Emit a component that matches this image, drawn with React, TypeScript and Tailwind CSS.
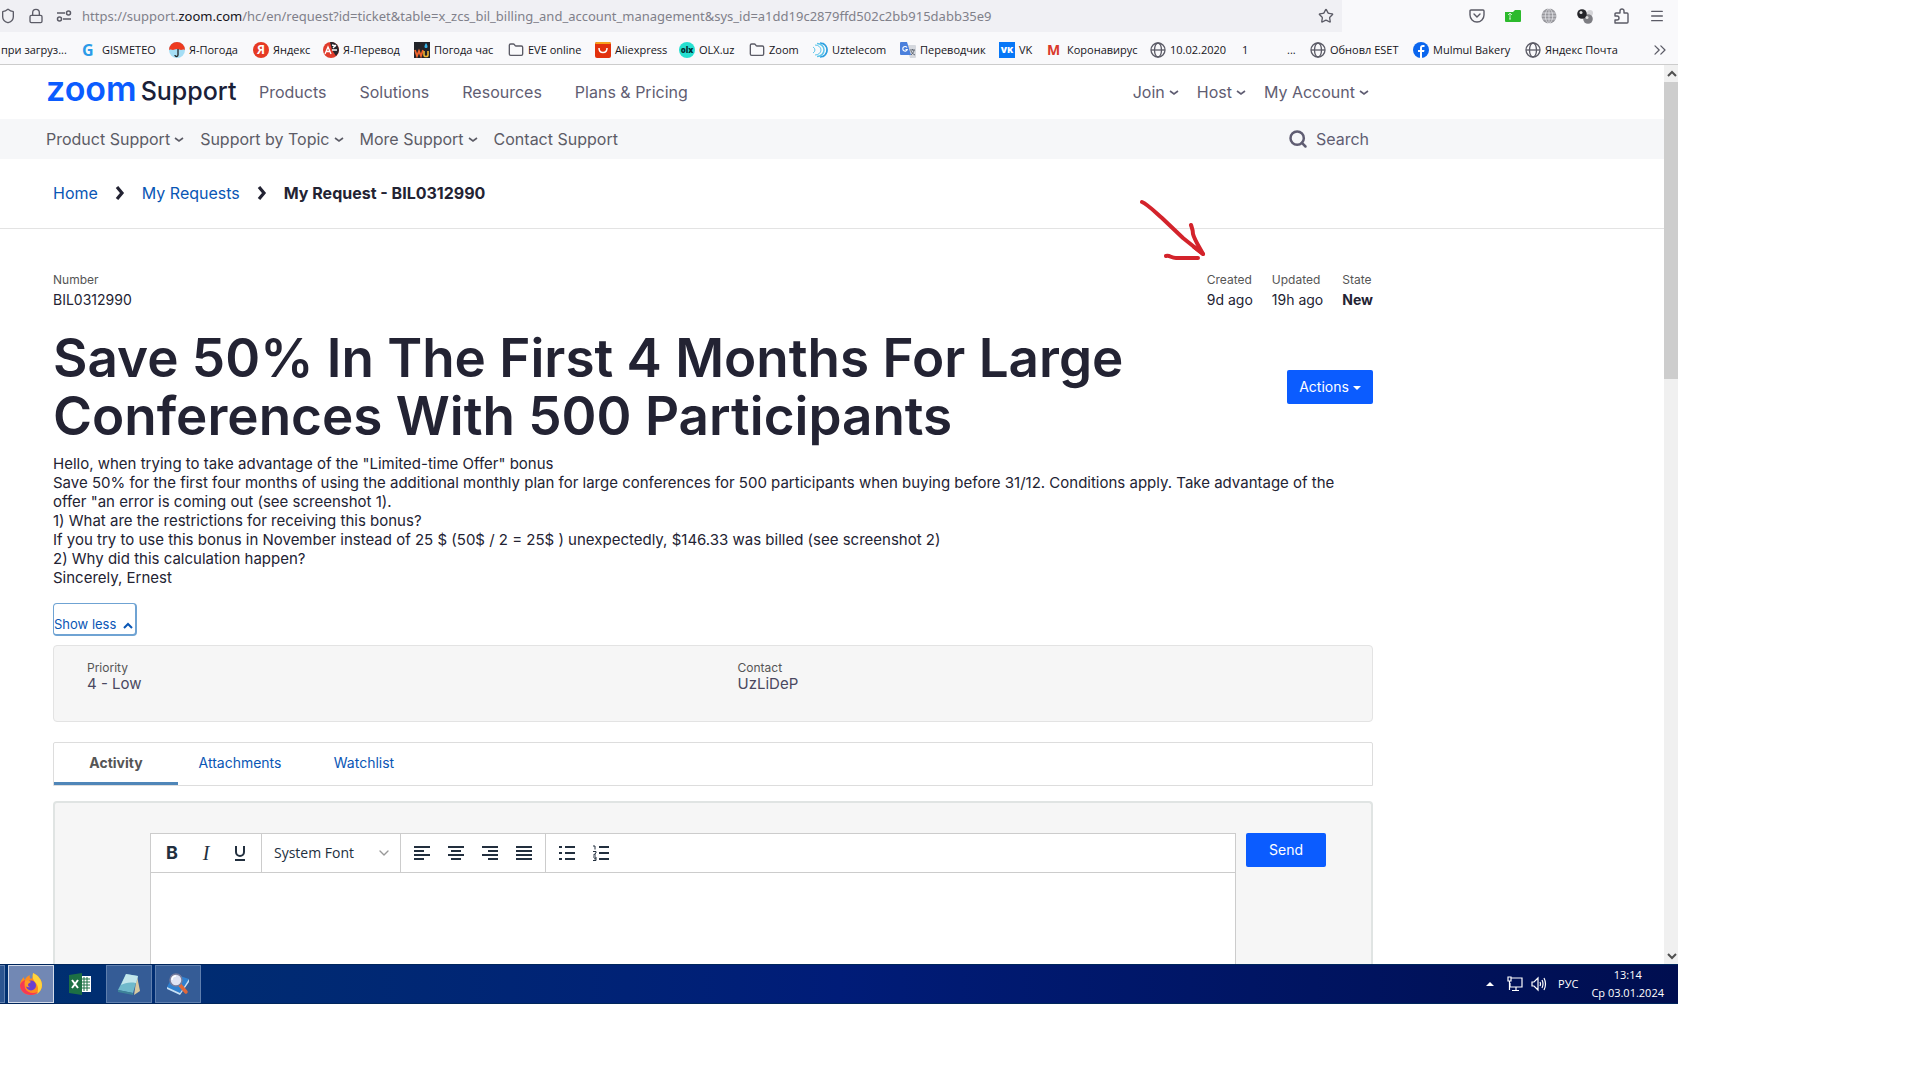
import type { ReactNode } from 'react';
import { ChevronDown, ChevronsRight, Folder, Lock, Menu, Search, Shield, Star } from 'lucide-react';

const bookmarks = [
  { label: 'при загруз...', icon: 'none', width: 'w-[81px]' },
  { label: 'GISMETEO', icon: 'gismeteo', width: 'w-[87px]' },
  { label: 'Я-Погода', icon: 'umbrella', width: 'w-[84px]' },
  { label: 'Яндекс', icon: 'yandex', width: 'w-[70px]' },
  { label: 'Я-Перевод', icon: 'translate', width: 'w-[91px]' },
  { label: 'Погода час', icon: 'wu', width: 'w-[94px]' },
  { label: 'EVE online', icon: 'folder', width: 'w-[87px]' },
  { label: 'Aliexpress', icon: 'ali', width: 'w-[84px]' },
  { label: 'OLX.uz', icon: 'olx', width: 'w-[70px]' },
  { label: 'Zoom', icon: 'folder', width: 'w-[63px]' },
  { label: 'Uztelecom', icon: 'uztelecom', width: 'w-[88px]' },
  { label: 'Переводчик', icon: 'google', width: 'w-[99px]' },
  { label: 'VK', icon: 'vk', width: 'w-[48px]' },
  { label: 'Коронавирус', icon: 'm', width: 'w-[103px]' },
  { label: '10.02.2020', icon: 'globe', width: 'w-[92px]' },
  { label: '1', icon: 'none', width: 'w-[45px]' },
  { label: '...', icon: 'none', width: 'w-[23px]' },
  { label: 'Обновл ESET', icon: 'globe', width: 'w-[103px]' },
  { label: 'Mulmul Bakery', icon: 'facebook', width: 'w-[112px]' },
  { label: 'Яндекс Почта', icon: 'globe', width: 'w-[100px]' },
];

function BookmarkIcon({ name }: { name: string }) {
  switch (name) {
    case 'folder':
      return <Folder className="size-4 shrink-0 text-[#5b5b66]" />;
    case 'globe':
      return (
        <svg className="size-4 shrink-0" viewBox="0 0 16 16" fill="none" stroke="#5b5b66" strokeWidth="1.3">
          <circle cx="8" cy="8" r="7" />
          <path d="M1 8h14" />
          <ellipse cx="8" cy="8" rx="3.5" ry="7" />
        </svg>
      );
    case 'gismeteo':
      return <span className="w-4 shrink-0 text-base leading-4 font-bold text-[#2b9be8]">G</span>;
    case 'm':
      return <span className="w-4 shrink-0 text-sm leading-4 font-bold text-[#d93a2b]">M</span>;
    case 'yandex':
      return <span className="flex size-4 shrink-0 items-center justify-center rounded-full bg-[#e63a23] text-xs leading-3 font-bold text-white">Я</span>;
    case 'olx':
      return <span className="flex size-4 shrink-0 items-center justify-center rounded-full bg-[#25e0d0] text-[8px] leading-3 font-extrabold text-[#012f34]">olx</span>;
    case 'vk':
      return <span className="flex size-4 shrink-0 items-center justify-center bg-[#0777f7] text-[9px] leading-3 font-extrabold text-white">VK</span>;
    case 'umbrella':
      return (
        <svg className="size-4 shrink-0" viewBox="0 0 16 16">
          <circle cx="8" cy="8" r="8" fill="#a5def5" />
          <path d="M0 8a8 8 0 0 1 16 0c-2-1-3 0-4 0s-2-1-4-1-3 1-4 1-2-1-4 0z" fill="#ee3a1f" />
          <path d="M9 7v6c0 2-3 2-3 0" fill="none" stroke="#222" strokeWidth="1.3" />
        </svg>
      );
    case 'translate':
      return (
        <svg className="size-4 shrink-0" viewBox="0 0 16 16">
          <circle cx="8" cy="8" r="8" fill="#e03c2c" />
          <path d="M7 0a8 8 0 0 1 6 14L9 8z" fill="#26262c" />
          <path d="M2 12l3-7 3 7M3 9.500h4M9 3l4 1M10 6l3-3M9 8h5" fill="none" stroke="#fff" strokeWidth="1.3" />
        </svg>
      );
    case 'wu':
      return (
        <svg className="size-4 shrink-0" viewBox="0 0 16 16">
          <path d="M0 0h16v16H0z" fill="#222429" />
          <path d="M1 8l2 6 2-5 2 5 2-6" fill="none" stroke="#f0642d" strokeWidth="1.8" />
          <path d="M10 9v4c0 2 4 2 4 0V9" fill="none" stroke="#f2b632" strokeWidth="1.6" />
          <path d="M12 1c-2 3-2 5 0 5s2-2 0-5z" fill="#36b2e5" />
        </svg>
      );
    case 'ali':
      return (
        <svg className="size-4 shrink-0" viewBox="0 0 16 16">
          <rect width="16" height="16" rx="2" fill="#e2300c" />
          <path d="M0 2q0-2 2-2h12q2 0 2 2z" fill="#f7a01c" />
          <path d="M4 6c0 6 8 6 8 0" fill="none" stroke="#fff" strokeWidth="1.5" />
        </svg>
      );
    case 'uztelecom':
      return (
        <svg className="size-4 shrink-0" viewBox="0 0 16 16" fill="none" stroke="#5cc4ea">
          <path d="M8 1a7 7 0 0 1 0 14" strokeWidth="1.5" stroke="#2f9fe0" />
          <path d="M5 1.500a7 6.500 0 0 1 0 13" strokeWidth="1.5" />
          <path d="M3 3a6 5 0 0 1 0 10M1 5a4 3.500 0 0 1 0 6" />
          <path d="M11 1a8 8 0 0 1 0 14" stroke="#2f9fe0" />
        </svg>
      );
    case 'google':
      return (
        <svg className="size-4 shrink-0" viewBox="0 0 16 16">
          <path d="M6 3h9q1 0 1 1v11q0 1-1 1H10z" fill="#d5d8de" />
          <path d="M1 0h6l4 13H1q-1 0-1-1V1q0-1 1-1z" fill="#4b80dc" />
          <path d="M7 5.500a2.300 2.300 0 1 0 .3 2H5.500" fill="none" stroke="#fff" strokeWidth="1.1" />
          <path d="M10 8h5M12.500 7v1M14 8c0 2-2 4-3 5M11 9c1 2 2 3 4 4" fill="none" stroke="#5f6672" />
        </svg>
      );
    case 'facebook':
      return (
        <svg className="size-4 shrink-0" viewBox="0 0 16 16">
          <circle cx="8" cy="8" r="8" fill="#0b66ee" />
          <path d="M7 16v-6H5V8h2V6c0-2 1-3 3-3h1.500v2H10C9 5 9 5.500 9 6v2h2.500L11 10H9v6z" fill="#fff" />
        </svg>
      );
    default:
      return null;
  }
}

function Caret() {
  return (
    <svg className="h-3 w-2.5" viewBox="0 0 10 12" fill="none" stroke="currentColor" strokeWidth="1.6" aria-hidden="true">
      <path d="M1 5l4 3 4-3" />
    </svg>
  );
}

function BrowserBar() {
  return (
    <div className="shrink-0 border-b border-[#ccc] bg-[#f9f9fb] font-['Open_Sans','Noto_Sans',sans-serif] text-[#5b5b66]">
      <div className="flex h-8 items-center">
        <div className="flex h-8 min-w-0 flex-1 items-center bg-[#f0f0f4]">
          <Shield className="size-4 shrink-0" />
          <Lock className="mx-3 size-4 shrink-0" />
          <svg className="size-4 shrink-0" viewBox="0 0 16 16" fill="none" stroke="currentColor" strokeWidth="1.5" aria-hidden="true">
            <path d="M1 5h8M7 11h8" />
            <circle cx="12.500" cy="5" r="2" />
            <circle cx="3.500" cy="11" r="2" />
          </svg>
          <div className="ml-[10px] min-w-0 flex-1 truncate pt-0.5 font-['Noto_Sans','Open_Sans',sans-serif] text-[13px] text-[#80808a]">
            https://support.<span className="text-[#15141a]">zoom.com</span>/hc/en/request?id=ticket&amp;table=x_zcs_bil_billing_and_account_management&amp;sys_id=a1dd19c2879ffd502c2bb915dabb35e9
          </div>
          <button type="button" aria-label="Bookmark" className="mr-2"><Star className="size-4" /></button>
        </div>
        <div className="flex w-[336px] shrink-0 items-center justify-end gap-5 pr-[13px]">
          <button type="button" aria-label="Pocket">
            <svg className="size-4" viewBox="0 0 16 16" fill="none" stroke="currentColor" strokeWidth="1.4">
              <path d="M1 3q0-1 1-1h12q1 0 1 1v4a7 7 0 0 1-14 0zM5 6l3 3 3-3" strokeLinecap="round" />
            </svg>
          </button>
          <button type="button" aria-label="Extension">
            <svg className="size-4" viewBox="0 0 16 16">
              <path d="M0 4h8l2-2h5q1 0 1 1v10q0 1-1 1H1q-1 0-1-1z" fill="#2cba2c" />
              <path d="M5 5v6M3 7l2-2 2 2M4 11h2" fill="none" stroke="#c5f0c5" />
            </svg>
          </button>
          <button type="button" aria-label="Network">
            <svg className="size-4" viewBox="0 0 16 16">
              <circle cx="8" cy="8" r="7.500" fill="#98989d" />
              <path d="M0 5h16M0 8h16M0 11h16M8 0v16M8 0C3 4 3 12 8 16C13 12 13 4 8 0" fill="none" stroke="#f9f9fb" strokeWidth=".6" />
            </svg>
          </button>
          <button type="button" aria-label="Proxy">
            <svg className="size-4" viewBox="0 0 16 16">
              <circle cx="13" cy="5" r="3" fill="#d5d5d8" />
              <circle cx="11" cy="11" r="4.800" fill="#7d7d82" />
              <circle cx="5" cy="6" r="4.800" fill="#252529" />
              <circle cx="4" cy="4.500" r="1.500" fill="#ddd" />
              <circle cx="10" cy="9.500" r="1.500" fill="#ddd" />
            </svg>
          </button>
          <button type="button" aria-label="Add-ons">
            <svg className="size-4" viewBox="0 0 16 16" fill="none" stroke="currentColor" strokeWidth="1.4" strokeLinejoin="round">
              <path d="M2 15h12q1 0 1-1V6q0-1-1-1h-3V3a2 2 0 0 0-4 0v2H3q-1 0-1 1v2h2a2 2 0 0 1 0 4H2z" />
            </svg>
          </button>
          <button type="button" aria-label="Menu"><Menu className="size-4" /></button>
        </div>
      </div>
      <nav className="flex h-8 items-center pt-1 pl-px text-[11px] text-[#15141a]">
        {bookmarks.map((item) => (
          <a key={item.label} href="#" className={`flex shrink-0 items-center gap-1 whitespace-nowrap ${item.width}`}>
            <BookmarkIcon name={item.icon} />
            {item.label}
          </a>
        ))}
        <button type="button" aria-label="More bookmarks" className="mr-2 ml-auto"><ChevronsRight className="size-5 text-[#5b5b66]" strokeWidth={1.5} /></button>
      </nav>
    </div>
  );
}

function SiteHeader() {
  return (
    <header className="shrink-0 text-[#5f5d72]">
      <div className="flex h-[54px] max-w-[1369px] items-center pl-[46px]">
        <a href="#" className="flex h-11 w-[213px] items-center gap-1 pb-1.5 whitespace-nowrap">
          <span className="text-[34px] leading-8 font-semibold text-[#0b5cff]">zoom</span>
          <span className="pt-1 text-[25px] leading-8 font-medium text-[#1a2038]">Support</span>
        </a>
        <nav className="flex flex-1 items-center gap-[33px]">
          {['Products', 'Solutions', 'Resources', 'Plans & Pricing'].map((label) => (
            <a key={label} href="#">{label}</a>
          ))}
        </nav>
        <div className="flex items-center gap-[18px]">
          {['Join', 'Host', 'My Account'].map((label) => (
            <button key={label} type="button" className="flex items-center gap-1">
              {label}
              <Caret />
            </button>
          ))}
        </div>
      </div>
      <div className="bg-[#f6f7f9]">
        <div className="flex h-10 max-w-[1369px] items-center pl-[46px] text-[#5c5c66]">
          <nav className="flex flex-1 items-center gap-4">
            {['Product Support', 'Support by Topic', 'More Support'].map((label) => (
              <button key={label} type="button" className="flex items-center gap-1">
                {label}
                <Caret />
              </button>
            ))}
            <a href="#">Contact Support</a>
          </nav>
          <button type="button" className="flex items-center gap-2 text-[#5f5d72]">
            <Search className="size-5" strokeWidth={3} />
            Search
          </button>
        </div>
      </div>
    </header>
  );
}

function CrumbArrow() {
  return (
    <svg className="mx-[17px] h-4 w-2.5" viewBox="0 0 10 16" fill="none" stroke="#232333" strokeWidth="3.2" aria-hidden="true">
      <path d="M2 2l5 6-5 6" />
    </svg>
  );
}

function Breadcrumb() {
  return (
    <nav aria-label="Breadcrumb" className="flex h-[70px] shrink-0 items-center border-b border-[#e3e3e3] pb-0.5 pl-[53px] text-[#0956b5]">
      <a href="#">Home</a>
      <CrumbArrow />
      <a href="#">My Requests</a>
      <CrumbArrow />
      <span className="font-bold text-[#232333]">My Request - BIL0312990</span>
    </nav>
  );
}

function Field({ label, value, bold = false }: { label: string; value: string; bold?: boolean }) {
  return (
    <div>
      <div className="text-xs leading-5 text-[#555]">{label}</div>
      <div className={bold ? 'text-sm leading-5 font-bold' : 'text-sm leading-5'}>{value}</div>
    </div>
  );
}

function PanelField({ label, value }: { label: string; value: string }) {
  return (
    <div className="flex-1 px-4">
      <div className="text-xs leading-4 text-[#555]">{label}</div>
      <div className="text-[15px] leading-4 text-[#4a4860]">{value}</div>
    </div>
  );
}

function ToolButton({ label, children }: { label: string; children: ReactNode }) {
  return (
    <button type="button" aria-label={label} className="flex size-[34px] items-center justify-center">
      {children}
    </button>
  );
}

function ToolIcon({ d }: { d: string }) {
  return (
    <svg className="size-4" viewBox="0 0 16 16" fill="none" stroke="currentColor" strokeWidth="2">
      <path d={d} />
    </svg>
  );
}

function Editor() {
  return (
    <div className="flex min-w-0 flex-1 flex-col border border-b-0 border-[#ccc] bg-white text-[#222f3e]">
      <div className="flex h-[39px] shrink-0 items-center border-b border-[#ccc]">
        <div className="flex h-full items-center border-r border-[#ccc] px-1">
          <ToolButton label="Bold"><span className="text-lg font-bold">B</span></ToolButton>
          <ToolButton label="Italic"><span className="font-['Liberation_Serif',serif] text-xl italic">I</span></ToolButton>
          <ToolButton label="Underline">
            <svg className="size-4" viewBox="0 0 16 16" fill="none" stroke="currentColor" strokeWidth="2">
              <path d="M4 1v6a4 4 0 0 0 8 0V1M3 15h10" />
            </svg>
          </ToolButton>
        </div>
        <label className="relative flex h-full w-[139px] items-center border-r border-[#ccc]">
          <select aria-label="Font" className="w-full appearance-none bg-transparent pl-3 font-['Open_Sans','Noto_Sans',sans-serif] text-sm">
            <option>System Font</option>
          </select>
          <ChevronDown className="pointer-events-none absolute right-2 size-4 text-[#999]" />
        </label>
        <div className="flex h-full items-center border-r border-[#ccc] px-1">
          <ToolButton label="Align left"><ToolIcon d="M0 2h16M0 6h10M0 10h16M0 14h10" /></ToolButton>
          <ToolButton label="Align center"><ToolIcon d="M0 2h16M3 6h10M0 10h16M3 14h10" /></ToolButton>
          <ToolButton label="Align right"><ToolIcon d="M0 2h16M6 6h10M0 10h16M6 14h10" /></ToolButton>
          <ToolButton label="Justify"><ToolIcon d="M0 2h16M0 6h16M0 10h16M0 14h16" /></ToolButton>
        </div>
        <div className="flex h-full items-center px-1">
          <ToolButton label="Bullet list"><ToolIcon d="M6 2h10M6 8h10M6 14h10M0 2h3M0 8h3M0 14h3" /></ToolButton>
          <ToolButton label="Numbered list">
            <svg className="size-4" viewBox="0 0 16 16" fill="none" stroke="currentColor">
              <path d="M6 2h10M6 8h10M6 14h10" strokeWidth="2" />
              <path d="M0 1h2v3.500M0 6.500h3v1.500l-2.500 2H3M0 12h3v3.500H0M1 13.800h2" />
            </svg>
          </ToolButton>
        </div>
      </div>
      <textarea aria-label="Message" className="w-full flex-1 resize-none outline-none" />
    </div>
  );
}

// Hand-drawn marker over the "Created" column
function RedArrow() {
  return (
    <svg className="pointer-events-none absolute top-[198px] left-[1138px] h-16 w-[72px]" viewBox="0 0 72 64" fill="none" stroke="#d3232b" strokeWidth="4" strokeLinecap="round" strokeLinejoin="round" aria-hidden="true">
      <path d="M4 4c5 2 12 9 20 16l21 20 20 16" />
      <path d="M53 27c1 3 2 5 2 9 2 7 6 12 10 20l-9-7" />
      <path d="M28 58c4-1 5 2 10 2h22" />
    </svg>
  );
}

function Ticket() {
  return (
    <main className="flex min-h-0 max-w-[1373px] flex-1 flex-col pl-[53px] text-[#232333]">
      <div className="mt-[41px] flex shrink-0 justify-between">
        <Field label="Number" value="BIL0312990" />
        <div className="flex gap-[19px]">
          <Field label="Created" value="9d ago" />
          <Field label="Updated" value="19h ago" />
          <Field label="State" value="New" bold />
        </div>
      </div>
      <div className="mt-[19px] flex shrink-0 justify-between">
        <h1 className="max-w-[1150px] text-[53px] leading-[58px] font-semibold">
          Save 50% In The First 4 Months For Large Conferences With 500 Participants
        </h1>
        <button type="button" className="mt-[41px] h-[34px] w-[86px] shrink-0 rounded-xs bg-[#0b5cff] text-sm text-white">
          Actions<span className="ml-1 inline-block border-x-4 border-t-4 border-x-transparent align-middle" />
        </button>
      </div>
      <div className="mt-[9px] shrink-0 pr-2 text-[15px] leading-[19px]">
        <p>Hello, when trying to take advantage of the "Limited-time Offer" bonus</p>
        <p>
          Save 50% for the first four months of using the additional monthly plan for large conferences for 500 participants when buying before 31/12. Conditions apply. Take advantage of the offer "an error is coming out (see screenshot 1).
        </p>
        <p>1) What are the restrictions for receiving this bonus?</p>
        <p>If you try to use this bonus in November instead of 25 $ (50$ / 2 = 25$ ) unexpectedly, $146.33 was billed (see screenshot 2)</p>
        <p>2) Why did this calculation happen?</p>
        <p>Sincerely, Ernest</p>
      </div>
      <button type="button" className="mt-4 flex h-[33px] w-[84px] shrink-0 items-end justify-between rounded border-2 border-t border-l border-[#6fa3d3] pr-0.5 text-[13px] text-[#0956b5]">
        Show less
        <svg className="mb-1 size-2.5" viewBox="0 0 10 10" fill="none" stroke="currentColor" strokeWidth="2">
          <path d="M1 8l4-4 4 4" />
        </svg>
      </button>
      <div className="mt-[9px] flex h-[77px] shrink-0 rounded-sm border border-[#e3e3e3] bg-[#f6f6f6] pt-[14px] pl-[17px]">
        <PanelField label="Priority" value="4 - Low" />
        <PanelField label="Contact" value="UzLiDeP" />
      </div>
      <div role="tablist" className="mt-5 flex h-11 shrink-0 rounded-t-xs border border-[#ddd] text-sm text-[#0956b5]">
        <button type="button" role="tab" aria-selected="true" className="w-[124px] border-b-3 border-[#4f86b8] font-bold text-[#555]">Activity</button>
        <button type="button" role="tab" aria-selected="false" className="w-[124px] pb-0.5">Attachments</button>
        <button type="button" role="tab" aria-selected="false" className="w-[124px] pb-0.5">Watchlist</button>
      </div>
      <div className="mt-[15px] flex min-h-0 flex-1 items-stretch gap-[10px] rounded-t-sm border-2 border-b-0 border-[#e0e4e3] bg-[#f6f6f6] pt-[30px] pr-[45px] pl-[95px]">
        <Editor />
        <button type="button" className="h-[34px] w-20 rounded-xs bg-[#0b5cff] text-sm text-white">Send</button>
      </div>
    </main>
  );
}

function Scrollbar() {
  return (
    <div className="flex w-3.5 shrink-0 flex-col items-center bg-[#f0f0f0] text-[#505050]">
      <svg className="h-[17px] w-3.5" viewBox="0 0 14 17" fill="none" stroke="currentColor" strokeWidth="2"><path d="M4 11l4-4 4 4" /></svg>
      <div className="h-[33%] w-full bg-[#cdcdcd]" />
      <svg className="mt-auto h-[17px] w-3.5" viewBox="0 0 14 17" fill="none" stroke="currentColor" strokeWidth="2"><path d="M4 7l4 4 4-4" /></svg>
    </div>
  );
}

function Taskbar() {
  return (
    <footer className="flex h-10 shrink-0 items-center border-y border-[#00265c] bg-linear-to-r from-[#003070] via-[#001c78] to-[#000e50] font-['Open_Sans','Noto_Sans',sans-serif] text-white">
      <div className="h-full w-[5px] border border-l-0 border-[#5f7fae] bg-[#2c5590]" />
      <button type="button" aria-label="Firefox" className="ml-[3px] flex h-full w-[46px] items-center justify-center border border-[#d5dcea] bg-[#7288b4]">
        <svg className="size-6" viewBox="0 0 24 24">
          <path d="M12 23C5 23 1 18 1 13c0-4 2-6 4-8 0 1 0 2 1 3 1-3 3-4 5-5-1 2 0 3 1 4 2-1 2-4 2-6 5 2 9 7 9 12 0 6-5 10-11 10z" fill="#ff8b1f" />
          <path d="M14 1c5 2 9 7 9 12 0 4-2 7-5 9 2-5 1-9-2-12-2-2-3-5-2-9z" fill="#ffd43c" />
          <path d="M1 13c0 6 5 10 11 10 3 0 5-1 7-3-5 2-11 1-13-4-1-3 0-6 0-8-2 1-4 2-5 5z" fill="#f53a55" />
          <circle cx="12" cy="13.500" r="5" fill="#6a3fd0" />
          <path d="M6 9c3-1 5 0 6 1-1 1-3 1-3 3 0 1 1 2 2 2-4 1-6-2-5-6z" fill="#ff9a22" />
        </svg>
      </button>
      <button type="button" aria-label="Excel" className="flex h-full w-[52px] items-center justify-center">
        <svg className="size-6" viewBox="0 0 24 24">
          <path d="M12 4h11v16H12z" fill="#fff" />
          <path d="M13 7h9M13 10h9M13 13h9M13 16h9M16 5v14M19 5v14" stroke="#1d7044" />
          <path d="M1 3l13-2v22L1 21z" fill="#1d7044" />
          <path d="M4 8l6 8M10 8l-6 8" stroke="#fff" strokeWidth="2" />
        </svg>
      </button>
      <button type="button" aria-label="Notepad" className="flex h-full w-[46px] items-center justify-center border border-[#5f7fae] bg-[#355c96]">
        <svg className="size-6" viewBox="0 0 24 24">
          <path d="M20 4l3 15-6 4z" fill="#d8c9a0" />
          <path d="M9 2l12 2-5 17L1 18z" fill="#6fb9cb" />
          <path d="M9 2l12 2-2 7C12 10 8 11 4 13z" fill="#c2e6ec" />
          <path d="M1 18l15 3v2L1 20z" fill="#3d8399" />
        </svg>
      </button>
      <button type="button" aria-label="Viewer" className="ml-[3px] flex h-full w-[46px] items-center justify-center border border-[#5f7fae] bg-[#355c96]">
        <svg className="size-6" viewBox="0 0 24 24">
          <path d="M8 2l15 5-9 14-13-6z" fill="#2f80d0" />
          <path d="M1 15l13 6 9-14v3l-9 13-13-6z" fill="#c5e0f6" />
          <path d="M14 13l6 7" stroke="#e0683a" strokeWidth="3.5" strokeLinecap="round" />
          <circle cx="10" cy="8" r="6" fill="#dfe3f3" stroke="#777c9c" strokeWidth="1.5" />
          <path d="M6 8c0-3 2-4 4-4" fill="none" stroke="#fff" strokeWidth="1.5" />
        </svg>
      </button>
      <div className="ml-auto flex items-center pr-[14px]">
        <span className="border-x-4 border-b-4 border-x-transparent border-b-white" />
        <svg className="ml-[13px] size-4" viewBox="0 0 16 16" fill="none" stroke="currentColor" strokeWidth="1.2">
          <path d="M4 2h11v9H3V7M9 11v3M5 14.500h7M1 1h3v4H1zM2.500 5v9" />
        </svg>
        <svg className="ml-2 size-4" viewBox="0 0 16 16" fill="none" stroke="currentColor" strokeWidth="1.2">
          <path d="M1 6h2l4-4v12l-4-4H1zM9 6q1 2 0 4M11 4q2 4 0 8M13 2q3 6 0 12" />
        </svg>
        <span className="ml-[11px] text-[11px]">РУС</span>
        <div className="ml-[13px] text-center text-[11px] leading-[18px]">
          <div>13:14</div>
          <div>Ср 03.01.2024</div>
        </div>
      </div>
    </footer>
  );
}

export default function App() {
  return (
    <div className="relative flex h-screen flex-col overflow-hidden bg-white pr-[242px] pb-[76px] font-[Inter,'Liberation_Sans',sans-serif] text-base">
      <BrowserBar />
      <div className="flex min-h-0 flex-1">
        <div className="flex min-w-0 flex-1 flex-col overflow-hidden">
          <SiteHeader />
          <Breadcrumb />
          <Ticket />
        </div>
        <Scrollbar />
      </div>
      <Taskbar />
      <RedArrow />
    </div>
  );
}
